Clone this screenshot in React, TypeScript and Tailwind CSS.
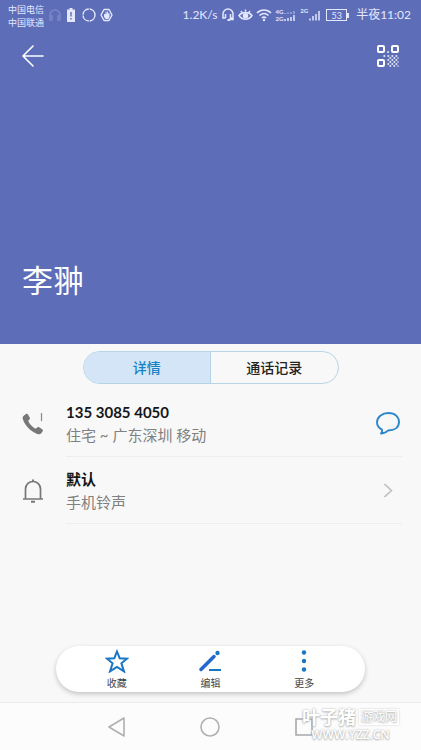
import type { ReactNode } from "react";

function StatusBar() {
  return (
    <div className="flex h-[30px] items-center pl-2 pr-[10px] text-[#e3e8ff]">
      <div className="mt-px text-[9px] leading-[13px]">
        <div>中国电信</div>
        <div>中国联通</div>
      </div>
      <svg className="ml-1 h-[14px] w-[14px] opacity-20" viewBox="0 0 14 14" fill="none" stroke="currentColor" strokeWidth="1.5">
        <path d="M2 11V7a5 5 0 0 1 10 0v4M2 8h2v4H2zM10 8h2v4h-2z" />
      </svg>
      <svg className="ml-[5px] h-[14px] w-2" viewBox="0 0 8 14">
        <path fill="currentColor" d="M2.500 0h3v1.500H8V14H0V1.500h2.500z" />
        <path stroke="#5e6db8" strokeWidth="1.400" d="M4 4v4.500M4 10v1.500" />
      </svg>
      <svg className="ml-[7px] h-[14px] w-[14px]" viewBox="0 0 14 14" fill="none" stroke="currentColor" strokeWidth="1.400">
        <circle cx="7" cy="7" r="6" strokeDasharray="8.500 0.900" />
      </svg>
      <svg className="ml-1 h-[14px] w-[13px]" viewBox="0 0 13 14" fill="none" stroke="currentColor">
        <path strokeWidth="1.400" d="M4 1.500h5L12 7l-3 5.500H4L1 7z" strokeLinejoin="round" />
        <path strokeWidth="1.100" fill="currentColor" d="M4.500 6.500v2l1.500 2h2l1-2V5.500M6 7V4M7.500 7V4" strokeLinecap="round" />
      </svg>
      <div className="ml-auto flex items-center">
        <span className="text-xs">1.2K/s</span>
        <svg className="ml-1 h-[14px] w-[14px]" viewBox="0 0 14 14" fill="none" stroke="currentColor" strokeWidth="1.500">
          <path d="M4.500 10H2V6a5 5 0 0 1 10 0v5.500H8M4.500 6v4M9.500 6v4H12" />
          <path d="M6.500 12h2.500" strokeWidth="2" />
        </svg>
        <svg className="ml-[3px] h-[14px] w-[15px]" viewBox="0 0 15 14" fill="none" stroke="currentColor" strokeWidth="1.500">
          <path d="M1 7.500c3-4 10-4 13 0-3 5-10 5-13 0zM3 3l1 1.500M7.500 1.500v2M12 3l-1 1.500" />
          <circle cx="7.500" cy="7.800" r="2" fill="currentColor" />
        </svg>
        <svg className="ml-[3px] h-[14px] w-4" viewBox="0 0 16 14" fill="none" stroke="currentColor" strokeWidth="1.600">
          <path d="M1 5c4-4 10-4 14 0M3.500 7.500c3-2.700 6-2.700 9 0M5.800 10c1.500-1.200 2.900-1.200 4.400 0" />
          <circle cx="8" cy="12" r="1.200" fill="currentColor" stroke="none" />
        </svg>
        <div className="ml-[3px] text-[6px] font-bold leading-[7px]">
          <div>4G</div>
          <div>2G</div>
        </div>
        <svg className="h-[14px] w-[14px]" viewBox="0 0 14 14" fill="none" stroke="currentColor" strokeWidth="1.500">
          <path d="M2 6V5M5 6V4.500M8 6V4M11 6V3" opacity=".5" />
          <path d="M2 13v-2M5 13v-3M8 13V9M11 13V7" />
        </svg>
        <span className="ml-[3px] self-start text-[6px] font-bold leading-[7px]">2G</span>
        <svg className="h-[14px] w-[13px]" viewBox="0 0 13 14" fill="none" stroke="currentColor" strokeWidth="1.500">
          <path d="M2 12.500v-2M5 12.500V8M8 12.500V6M11 12.500V3" />
        </svg>
        <div className="ml-[5px] flex items-center">
          <span className="flex h-3 w-[21px] items-center justify-center border border-current text-[9px] leading-none">53</span>
          <span className="h-[5px] w-[2px] bg-current" />
        </div>
        <span className="ml-[7px] text-xs">半夜11:02</span>
      </div>
    </div>
  );
}

function QrIcon() {
  return (
    <svg className="h-[22px] w-[22px]" viewBox="0 0 22 22" fill="none" stroke="white">
      <g strokeWidth="2">
        <rect x="1" y="1" width="6" height="6" rx="1" />
        <rect x="15" y="1" width="6" height="6" rx="1" />
        <rect x="1" y="15" width="6" height="6" rx="1" />
      </g>
      <path
        strokeWidth="1.700"
        strokeDasharray="1.700 2.300"
        d="M10.200 7h2M6.500 11h15M12.500 13h9M10.500 15h11M12.500 17h9M10.500 19h11M12.500 21h9"
      />
    </svg>
  );
}

function Row({ icon, title, detail, action }: { icon: ReactNode; title: string; detail: string; action: ReactNode }) {
  return (
    <li className="flex h-[67px] pl-[22px] pr-[19px]">
      <div className="flex w-11 shrink-0 items-center">{icon}</div>
      <div className="flex flex-1 items-center justify-between border-b border-[#ededed]">
        <div>
          <p className="text-[15px] font-bold leading-6 text-[#161616]">{title}</p>
          <p className="text-[15px] leading-[22px] text-[#808080]">{detail}</p>
        </div>
        {action}
      </div>
    </li>
  );
}

function Action({ label, children }: { label: string; children: ReactNode }) {
  return (
    <button type="button" className="flex flex-col items-center gap-[2px] text-[10px] leading-4 text-[#444]">
      <svg className="h-6 w-6" viewBox="0 0 24 24" fill="none" stroke="#1976c5">
        {children}
      </svg>
      {label}
    </button>
  );
}

export default function App() {
  return (
    <div className="flex min-h-screen flex-col bg-[#f8f8f8] font-['Lato','Noto_Sans_CJK_SC',sans-serif]">
      <header className="flex h-[344px] flex-col bg-[#5e6db8] text-white">
        <StatusBar />
        <div className="flex h-[52px] items-center justify-between px-[22px]">
          <button type="button" aria-label="返回">
            <svg className="h-[22px] w-[22px]" viewBox="0 0 22 22" fill="none" stroke="white" strokeWidth="1.600" strokeLinecap="round" strokeLinejoin="round">
              <path d="M11 1 1 11l10 10M1 11h20" />
            </svg>
          </button>
          <button type="button" aria-label="二维码">
            <QrIcon />
          </button>
        </div>
        <h1 className="mb-[42px] mt-auto px-[22px] text-[31px] leading-[44px]">李翀</h1>
      </header>

      <main className="flex flex-1 flex-col">
        <div className="mx-auto mt-[7px] flex h-[33px] w-64 overflow-hidden rounded-full border border-[#b5d5e5] text-[14px] font-medium">
          <button type="button" className="flex-1 border-r border-[#b5d5e5] bg-[#d3e5f7] text-[#1782c5]">详情</button>
          <button type="button" className="flex-1 text-[#222]">通话记录</button>
        </div>

        <ul className="mt-[6px]">
          <Row
            title="135 3085 4050"
            detail="住宅 ~ 广东深圳 移动"
            icon={
              <svg className="h-6 w-6" viewBox="0 0 24 24">
                <path
                  fill="#777"
                  d="M2 3.500 4 2c.8-.5 1.500-.2 2 .6l1.700 3c.5.900.2 1.500-.4 2.100l-1.200 1c1.500 3.500 4 6 7.600 8l1.500-1.300c.6-.5 1.200-.6 2-.1l3 1.900c.800.500 1 1.200.5 2l-1.400 2.100c-1 1.200-2.500 1.300-4 .7C8 19 3 13.500.800 7 .4 5.500.800 4.500 2 3.500z"
                />
                <path stroke="#888" strokeWidth="1.200" d="M19.500 1v8" />
              </svg>
            }
            action={
              <button type="button" aria-label="发送信息" className="mr-[2px]">
                <svg className="h-6 w-6" viewBox="0 0 24 24" fill="none" stroke="#2c88c9" strokeWidth="1.900" strokeLinejoin="round">
                  <path d="M6 18.700C2.800 17 1 14.500 1 11.300 1 6 6 2 12.500 2S23 6 23 11c0 5.500-4.500 8.500-11 8.500-1.500 1.800-4 2.700-7 3 1-1 1.300-2.500 1-3.800z" />
                </svg>
              </button>
            }
          />
          <Row
            title="默认"
            detail="手机铃声"
            icon={
              <svg className="h-6 w-[22px]" viewBox="0 0 22 24" fill="none" stroke="#777" strokeWidth="1.700">
                <path d="M1 20h20M3.500 20V10a7.500 7.500 0 0 1 15 0v10" />
                <path d="M11 .5v2M9 22.800h4" strokeWidth="2" />
              </svg>
            }
            action={
              <button type="button" aria-label="更改铃声" className="mr-[9px]">
                <svg className="h-[15px] w-[10px]" viewBox="0 0 10 15" fill="none" stroke="#bbb" strokeWidth="1.500">
                  <path d="m1.500 1 7 6.500-7 6.500" />
                </svg>
              </button>
            }
          />
        </ul>

        <div className="mx-14 mb-[10px] mt-auto grid h-[46px] grid-cols-3 rounded-full bg-white px-[14px] pt-[3px] shadow-[0_2px_5px_rgba(0,0,0,0.22)]">
          <Action label="收藏">
            <path strokeWidth="2" d="m12 2.500 2.700 6.700 7.300.5-5.600 4.600 2.600 8.100L12 18l-7 4.400 2.600-8.100L2 9.700l7.300-.5z" />
          </Action>
          <Action label="编辑">
            <path strokeWidth="3.500" strokeLinecap="round" d="M3 20.500 16 7.500" stroke="#2168cf" />
            <path strokeWidth="2" d="M11 21h12" />
            <circle cx="19.500" cy="4" r="2.200" fill="#1976c5" stroke="none" />
          </Action>
          <Action label="更多">
            <g fill="#1976c5" stroke="none">
              <circle cx="12" cy="3.500" r="2.200" />
              <circle cx="12" cy="12" r="2.200" />
              <circle cx="12" cy="20.500" r="2.200" />
            </g>
          </Action>
        </div>
      </main>

      <nav className="relative grid h-12 grid-cols-3 items-center justify-items-center border-t border-[#ececec] bg-[#fcfcfc] px-[70px]">
        <button type="button" aria-label="后退">
          <svg className="h-5 w-5" viewBox="0 0 20 20" fill="none" stroke="#b0b0b0" strokeWidth="1.600" strokeLinejoin="round">
            <path d="M17 1v18L2 10z" />
          </svg>
        </button>
        <button type="button" aria-label="主屏幕">
          <svg className="h-5 w-5" viewBox="0 0 20 20" fill="none" stroke="#b0b0b0" strokeWidth="1.600">
            <circle cx="10" cy="10" r="9" />
          </svg>
        </button>
        <button type="button" aria-label="最近任务">
          <svg className="h-5 w-5" viewBox="0 0 20 20" fill="none" stroke="#a8a8a8" strokeWidth="1.600">
            <path d="M2 2h16v16H2z" />
          </svg>
        </button>
        <div className="absolute right-[22px] top-1 flex flex-col items-center gap-[2px] text-white [text-shadow:0_0_2px_#aaa,0_1px_2px_#bbb]">
          <div className="flex items-center gap-[3px]">
            <span className="text-[18px] font-bold leading-5">叶子猪</span>
            <span className="border border-white px-px text-[12px] leading-[14px] shadow-[0_0_2px_#ccc]">游戏网</span>
          </div>
          <div className="font-['Open_Sans',sans-serif] text-[12px] font-semibold leading-3">WWW.YZZ.CN</div>
        </div>
      </nav>
    </div>
  );
}
